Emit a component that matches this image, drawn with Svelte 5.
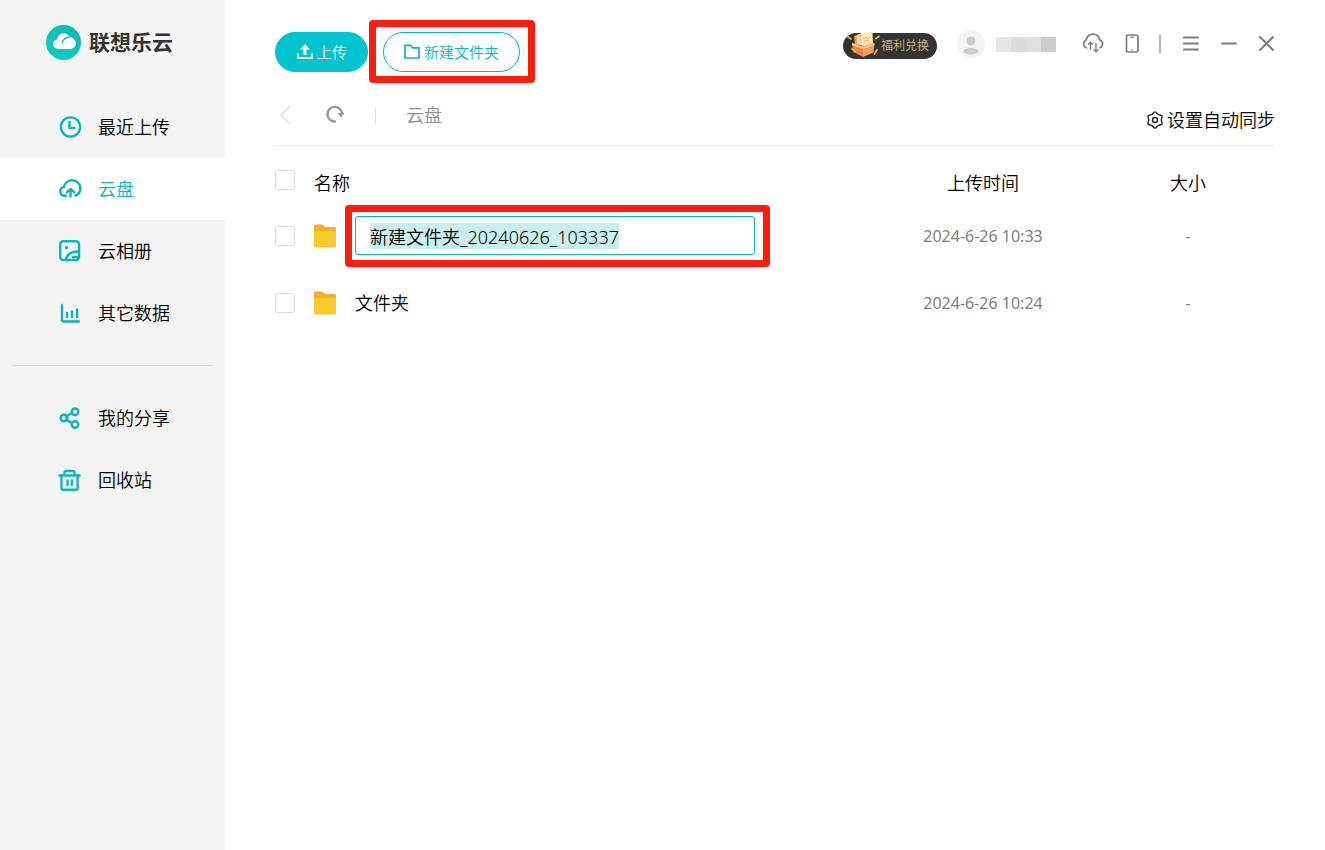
<script lang="ts">
	import { onMount } from 'svelte';

	let current = 'cloud';
	let newName = '新建文件夹_20240626_103337';
	let nameInput: HTMLInputElement;

	const mainLinks = [
		{ id: 'recent', label: '最近上传' },
		{ id: 'cloud', label: '云盘' },
		{ id: 'album', label: '云相册' },
		{ id: 'data', label: '其它数据' }
	];
	const moreLinks = [
		{ id: 'share', label: '我的分享' },
		{ id: 'trash', label: '回收站' }
	];

	let files = [
		{ name: '', time: '2024-6-26 10:33', size: '-', editing: true, checked: false },
		{ name: '文件夹', time: '2024-6-26 10:24', size: '-', editing: false, checked: false }
	];

	const toggleAll = (event: Event) => {
		const { checked } = event.target as HTMLInputElement;
		files = files.map((file) => ({ ...file, checked }));
	};

	onMount(() => {
		nameInput?.focus();
		nameInput?.select();
	});
</script>

<div class="app">
	<aside class="sidebar">
		<div class="logo">
			<svg width="36" height="36" viewBox="0 0 36 36" aria-hidden="true">
				<defs>
					<linearGradient id="logo-bg" x1="0" y1="1" x2="1" y2="0">
						<stop offset="0" stop-color="#16cfc4" />
						<stop offset="1" stop-color="#08b8b4" />
					</linearGradient>
				</defs>
				<circle cx="17.500" cy="18.500" r="17.500" fill="url(#logo-bg)" />
				<path
					d="M12 25a5 5 0 0 1-5-4.800c0-2.600 1.700-4.400 4-4.800C11.800 11.500 14.300 9.200 17.600 9.200c2.800 0 5 1.500 6 3.800 3.600.400 6.200 3 6.200 6.300 0 3.300-2.500 5.700-5.800 5.700z"
					fill="#fff"
				/>
				<path d="M16.200 19.500c.500-3.800 3.500-6.400 7.600-6.500" fill="none" stroke="#10c3bb" stroke-width="1.500" />
			</svg>
			<span>联想乐云</span>
		</div>

		<nav>
			{#each [mainLinks, moreLinks] as group, i}
				{#if i > 0}<hr />{/if}
				{#each group as link}
					<a
						href="#{link.id}"
						class:active={current === link.id}
						on:click={() => (current = link.id)}
					>
						<svg class="nav-icon" width="24" height="24" viewBox="0 0 24 24" aria-hidden="true">
							{#if link.id === 'recent'}
								<circle cx="12.500" cy="12" r="9.600" />
								<path d="M11.500 7v6h5" />
							{:else if link.id === 'cloud'}
								<path d="M8 18.800H6.500a4.500 4.500 0 0 1-.5-8.900C6.800 5.900 10 3.200 14 3.200c4.800 0 8.400 3.600 8.400 8 0 3.600-2 6.400-5 7.300" />
								<path d="M12.500 19.500v-7M9 15.200l3.500-3.300 3.500 3.300" />
							{:else if link.id === 'album'}
								<rect x="2.200" y="2.200" width="18.800" height="18.800" rx="3" />
								<path d="M8 21c.8-5.500 5.500-8.500 12.500-8.500M15 18h5" />
								<circle cx="8.500" cy="8.500" r="1.700" class="solid" />
							{:else if link.id === 'data'}
								<path d="M4 4v14.500c0 1.200.8 2 2 2H21" />
								<path d="M9 12v4M14 10.500v5.500M19 8.500v7.500" />
							{:else if link.id === 'share'}
								<path d="M8 10.500l6-3.500M8 13.500l6 3.500" />
								<circle cx="6" cy="12" r="3.300" />
								<circle cx="17" cy="5.800" r="3.300" />
								<circle cx="17" cy="18.500" r="3.300" />
							{:else}
								<path d="M1.500 7.500h20M6.500 7V5c0-1.300.7-2 2-2h6c1.300 0 2 .7 2 2v2" />
								<path d="M3.500 7.500v12.500c0 1.200.7 1.800 1.800 1.800h12.500c1.100 0 1.800-.6 1.800-1.800V7.500M9.500 12.500v4.500M13.800 12.500v4.500" />
							{/if}
						</svg>
						{link.label}
					</a>
				{/each}
			{/each}
		</nav>
	</aside>

	<main>
		<header>
			<div class="actions">
				<button class="btn primary">
					<svg width="16" height="16" viewBox="0 0 16 16" aria-hidden="true">
						<path d="M8 0l5 5.500H9.500V11h-3V5.500H3z" fill="#fff" />
						<path d="M1 9.500V14H15V9.500" fill="none" stroke="#fff" stroke-width="2" />
					</svg>
					上传
				</button>
				<div class="marked">
					<button class="btn outline">
						<svg width="16" height="16" viewBox="0 0 16 16" aria-hidden="true">
							<path d="M1 14V1.300h5.500l2.200 2.500H15V14z" fill="none" stroke="#0db5bb" stroke-width="1.700" />
						</svg>
						新建文件夹
					</button>
				</div>
			</div>

			<div class="tools">
				<button class="welfare">
					<svg width="38" height="28" viewBox="0 0 38 28" aria-hidden="true">
						<path d="M11 4l3-1 3 10-5-1z" fill="#d9a860" />
						<path d="M13.500 3l4-1.500 2 12-5-1z" fill="#f3d590" />
						<path d="M17.500 1l12-1 .5 12-11 3z" fill="#fce9b9" />
						<path d="M20 6.500h2l1-1.500 1.500 2L27 5.500M21 9l5-.5" fill="none" stroke="#f4ad6b" />
						<path d="M9 11l11 3.500V25L10 20z" fill="#ee8345" />
						<path d="M20 14.500l11.500-3.500-1 9.500L20 25z" fill="#fb9a5b" />
						<path d="M9 11l11 3.500 11.500-3.500-.3 2.500L20 17 9.200 13.500z" fill="#ffc08a" />
						<path d="M4.500 4.500l3.500 2.500M33 6.500l3-2M34 18l-2.500 4M9 17l4 2.500" stroke="#e9b440" stroke-width="1.800" stroke-linecap="round" />
					</svg>
					福利兑换
				</button>
				<button class="user" aria-label="账户">
					<svg width="28" height="28" viewBox="0 0 28 28" aria-hidden="true">
						<circle cx="14" cy="14" r="14" fill="#f3f3f3" />
						<circle cx="14" cy="11" r="4.500" fill="#cdcdcd" />
						<ellipse cx="14" cy="21.300" rx="7.500" ry="3.200" fill="#cdcdcd" />
					</svg>
					<span class="masked"><i></i><i></i><i></i><i></i></span>
				</button>
				<button class="icon" aria-label="传输列表">
					<svg width="24" height="22" viewBox="0 0 24 22" aria-hidden="true">
						<path d="M5.500 14.800A4.200 4.200 0 0 1 5.200 7C6 3.500 8.600 1.200 12 1.200s6 2.300 6.800 5.800a4.200 4.200 0 0 1 .2 7.800" />
						<path d="M9.500 16.500V9.500M7.500 11.300l2-2 2 2M15 10.500v8M13 16.700l2 2 2-2" stroke-width="1.400" />
					</svg>
				</button>
				<button class="icon" aria-label="手机版">
					<svg width="14" height="20" viewBox="0 0 14 20" aria-hidden="true">
						<rect x="1.500" y="1" width="11.500" height="17" rx="1.500" />
						<path d="M5.700 3.200h3M7 15.700h.5" stroke-width="1.300" />
					</svg>
				</button>
				<span class="bar"></span>
				<button class="icon" aria-label="菜单">
					<svg width="18" height="18" viewBox="0 0 18 18" aria-hidden="true">
						<path d="M3 2.500h14M3 8.500h14M3 14.500h14" stroke-width="2" />
					</svg>
				</button>
				<button class="icon" aria-label="最小化">
					<svg width="18" height="18" viewBox="0 0 18 18" aria-hidden="true">
						<path d="M3 8.500h14" stroke-width="2" />
					</svg>
				</button>
				<button class="icon" aria-label="关闭">
					<svg width="18" height="18" viewBox="0 0 18 18" aria-hidden="true">
						<path d="M3 2l13 13M16 2L3 15" stroke-width="2" />
					</svg>
				</button>
			</div>
		</header>

		<div class="path-bar">
			<button class="icon" aria-label="后退">
				<svg width="20" height="20" viewBox="0 0 20 20" aria-hidden="true">
					<path d="M14 2L6 10l8 8" stroke="#e6e6e6" stroke-width="2" />
				</svg>
			</button>
			<button class="icon" aria-label="刷新">
				<svg width="20" height="20" viewBox="0 0 20 20" aria-hidden="true">
					<path d="M10 16.500A7.300 7.300 0 1 1 17 8.500" stroke="#999" stroke-width="2.400" />
					<path d="M12.500 8h7l-3.300 4.500z" class="arrow" />
				</svg>
			</button>
			<span class="split"></span>
			<a class="crumb" href="#cloud">云盘</a>
			<button class="sync">
				<svg width="18" height="18" viewBox="0 0 18 18" aria-hidden="true">
					<path
						d="M9 .9C10.300.9 11 2.800 12.200 3.500s3.100.2 3.700 1.400-.6 2.700-.6 4.100 1.200 2.900.6 4.100-2.500.7-3.700 1.400S10.300 17.100 9 17.100 7 15.200 5.800 14.500s-3.100-.2-3.700-1.400.6-2.700.6-4.100-1.200-2.900-.6-4.100 2.500-.7 3.700-1.400S7.700.9 9 .9z"
					/>
					<circle cx="9" cy="9" r="2.500" />
				</svg>
				设置自动同步
			</button>
		</div>

		<table>
			<thead>
				<tr>
					<th class="check"><input type="checkbox" aria-label="全选" on:change={toggleAll} /></th>
					<th class="name">名称</th>
					<th class="time">上传时间</th>
					<th class="size">大小</th>
				</tr>
			</thead>
			<tbody>
				{#each files as file}
					<tr>
						<td class="check">
							<input type="checkbox" aria-label="选择" bind:checked={file.checked} />
						</td>
						<td class="name">
							<div class="file">
								<svg width="22" height="24" viewBox="0 0 22 24" aria-hidden="true">
									<path d="M0 2a1.500 1.500 0 0 1 1.500-1.500h6.500l3.500 2.500h9A1.500 1.500 0 0 1 22 4.500V12H0z" fill="#f2b02a" />
									<rect y="7" width="22" height="16.500" rx="1.500" fill="#f8ca2b" />
								</svg>
								{#if file.editing}
									<div class="marked rename">
										<input
											type="text"
											aria-label="文件夹名称"
											spellcheck="false"
											bind:this={nameInput}
											bind:value={newName}
										/>
									</div>
								{:else}
									<span>{file.name}</span>
								{/if}
							</div>
						</td>
						<td class="time">{file.time}</td>
						<td class="size">{file.size}</td>
					</tr>
				{/each}
			</tbody>
		</table>
	</main>
</div>

<style>
	:global(body) {
		background: #fff;
	}

	.app {
		display: flex;
		min-height: 100vh;
		color: #000;
		font-family: 'Noto Sans', 'Noto Sans CJK SC', sans-serif;
		font-size: 18px;
		font-weight: 350;
		line-height: 24px;
	}

	button,
	input {
		margin: 0;
		font: inherit;
		color: inherit;
	}

	button {
		padding: 0;
		border: 0;
		background: none;
		cursor: pointer;
	}

	svg {
		display: block;
		flex: none;
	}

	.sidebar {
		flex: none;
		width: 225px;
		background: #f4f4f4;
	}

	.logo {
		display: flex;
		align-items: center;
		gap: 7px;
		padding: 24px 0 36px 46px;
		color: #333;
		font-size: 21px;
		font-weight: 700;
	}

	nav a {
		display: flex;
		align-items: center;
		gap: 16px;
		height: 62px;
		padding-left: 58px;
		color: #000;
		text-decoration: none;
	}

	nav a.active {
		background: #fff;
		color: #0db5bb;
	}

	.nav-icon {
		fill: none;
		stroke: #0db5bb;
		stroke-width: 2.4;
		stroke-linecap: round;
		stroke-linejoin: round;
	}

	.nav-icon .solid {
		fill: #0db5bb;
		stroke: none;
	}

	hr {
		margin: 21px 12px;
		border: 0;
		border-top: 1px solid #e2e2e2;
	}

	main {
		flex: 1;
		min-width: 0;
		padding: 32px 50px 0;
	}

	header {
		display: flex;
		justify-content: space-between;
	}

	.actions {
		display: flex;
		gap: 15px;
	}

	.btn {
		display: flex;
		align-items: center;
		justify-content: center;
		gap: 4px;
		height: 40px;
		padding: 0 20px;
		border: 1px solid #0db5bb;
		border-radius: 20px;
		font-size: 15px;
	}

	.btn.primary {
		padding: 0 20px 0 21px;
		border-color: #00c3cf;
		background: #00c3cf;
		color: #fff;
	}

	.btn.outline {
		background: #fff;
		box-shadow: 0 0 0 6px #f3fcfc;
		color: #0db5bb;
	}

	.marked {
		position: relative;
	}

	.marked::after {
		content: '';
		position: absolute;
		inset: -12px -15px -11px -14px;
		border: 7px solid #ff1d10;
		border-radius: 4px;
		pointer-events: none;
	}

	.marked.rename::after {
		inset: -11px -15px -12px -10px;
	}

	.tools {
		display: flex;
		align-items: center;
		gap: 20px;
		height: 24px;
	}

	.welfare {
		display: flex;
		align-items: center;
		height: 26px;
		margin-top: 4px;
		padding-right: 8px;
		border-radius: 13px;
		background: #343434;
		color: #cdb47e;
		font-size: 12px;
		line-height: 16px;
	}

	.user {
		display: flex;
		align-items: center;
		gap: 11px;
		margin-right: 5px;
	}

	.masked {
		display: flex;
	}

	.masked i {
		width: 15px;
		height: 15px;
		background: #e8e4e1;
	}

	.masked i:nth-child(2) {
		background: #d9dbdd;
	}

	.masked i:nth-child(3) {
		background: #e0dedc;
	}

	.masked i:nth-child(4) {
		background: #cccdd2;
	}

	.icon svg {
		fill: none;
		stroke: #7d7d7d;
		stroke-width: 1.7;
		stroke-linecap: round;
		stroke-linejoin: round;
	}

	.icon .arrow {
		fill: #999;
		stroke: none;
	}

	.bar {
		width: 2px;
		height: 18px;
		background: #b3b3b3;
	}

	.path-bar {
		display: flex;
		align-items: center;
		gap: 30px;
		height: 74px;
		padding-top: 13px;
		border-bottom: 1px solid #ebebf0;
		box-sizing: border-box;
	}

	.split {
		width: 1px;
		height: 17px;
		background: #dcdce2;
	}

	.crumb {
		color: #909090;
		text-decoration: none;
	}

	.sync {
		display: flex;
		align-items: center;
		gap: 3px;
		margin-top: 10px;
		margin-left: auto;
	}

	.sync svg {
		fill: none;
		stroke: #222;
		stroke-width: 1.4;
	}

	table {
		width: 100%;
		border-collapse: collapse;
		table-layout: fixed;
	}

	th,
	td {
		height: 67px;
		padding: 0;
		box-sizing: border-box;
		font-weight: inherit;
		text-align: left;
	}

	th {
		height: 56px;
		padding-top: 18px;
	}

	th.check {
		padding-top: 12px;
	}

	.check {
		width: 39px;
	}

	th.time,
	td.time {
		width: 236px;
		text-align: center;
	}

	th.size,
	td.size {
		width: 174px;
		text-align: center;
	}

	td.time,
	td.size {
		color: #808080;
		font-size: 16px;
		font-weight: 400;
	}

	input[type='checkbox'] {
		display: block;
		width: 20px;
		height: 20px;
		border: 1px solid #dcdcdc;
		border-radius: 3px;
		background: #fff;
		appearance: none;
	}

	input[type='checkbox']:checked {
		border-color: #0db5bb;
		background: #0db5bb;
	}

	.file {
		display: flex;
		align-items: center;
		gap: 19px;
	}

	input[type='text'] {
		display: block;
		width: 400px;
		height: 39px;
		padding: 0 14px;
		border: 1px solid #0db5bb;
		border-radius: 3px;
		box-sizing: border-box;
		background: #fff;
		outline: none;
	}

	input[type='text']::selection {
		background: #caefef;
		color: #000;
	}
</style>
